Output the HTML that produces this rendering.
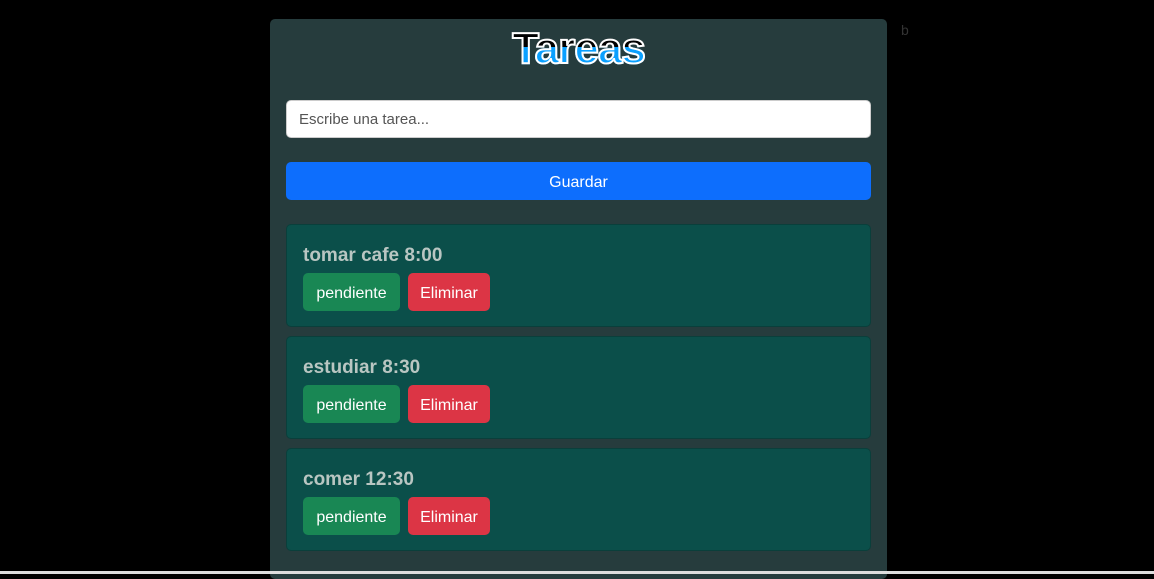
<!DOCTYPE html>
<html><head><style>
body{margin:0;width:1154px;height:574px;background:#000;overflow:hidden;font-family:"Liberation Sans",sans-serif;position:relative}
.c{position:absolute;left:270px;top:19px;width:617px;height:560px;background:#263c3d;border-radius:5px}
h1{position:absolute;left:0;width:617px;top:2px;margin:0;text-align:center;font-size:44px;line-height:56px;font-weight:bold;color:#0aa0ff;background:linear-gradient(#000 0,#000 46%,#0aa0ff 46%);-webkit-background-clip:text;-webkit-text-fill-color:transparent;-webkit-text-stroke:2px #fff;letter-spacing:-1px}
.in{position:absolute;left:16px;top:81px;background:#fff;border:1px solid #ccc;border-radius:5px;font-size:15px;color:#555;line-height:38px;padding-left:12px;box-sizing:border-box;width:585px;height:38px}
.g{position:absolute;left:16px;top:143px;width:585px;height:38px;background:#0d6efd;border-radius:5px;color:#fff;text-align:center;line-height:41px;font-size:16px}
.card{position:absolute;left:16px;width:585px;height:103px;background:#0b4f4a;border:1px solid #0a3f3b;border-radius:5px;box-sizing:border-box}
.card .t{position:absolute;left:16px;top:20px;font-size:19px;font-weight:bold;color:#b9c6c2}
.b{position:absolute;top:48px;height:38px;line-height:41px;border-radius:5px;color:#fff;font-size:16px;text-align:center}
.p{left:16px;width:97px;background:#198754}.e{left:121px;width:82px;background:#dc3545}
.line{position:absolute;left:0;top:571px;width:1154px;height:3px;background:#ddd}
.x{position:absolute;left:901px;top:22px;color:#333;font-size:14px}
</style></head><body>
<div class="c">
<h1>Tareas</h1>
<div class="in">Escribe una tarea...</div>
<div class="g">Guardar</div>
<div class="card" style="top:205px"><div class="t">tomar cafe 8:00</div><div class="b p">pendiente</div><div class="b e">Eliminar</div></div>
<div class="card" style="top:317px"><div class="t">estudiar 8:30</div><div class="b p">pendiente</div><div class="b e">Eliminar</div></div>
<div class="card" style="top:429px"><div class="t">comer 12:30</div><div class="b p">pendiente</div><div class="b e">Eliminar</div></div>
</div>
<div class="x">b</div>
<div class="line"></div>
</body></html>
